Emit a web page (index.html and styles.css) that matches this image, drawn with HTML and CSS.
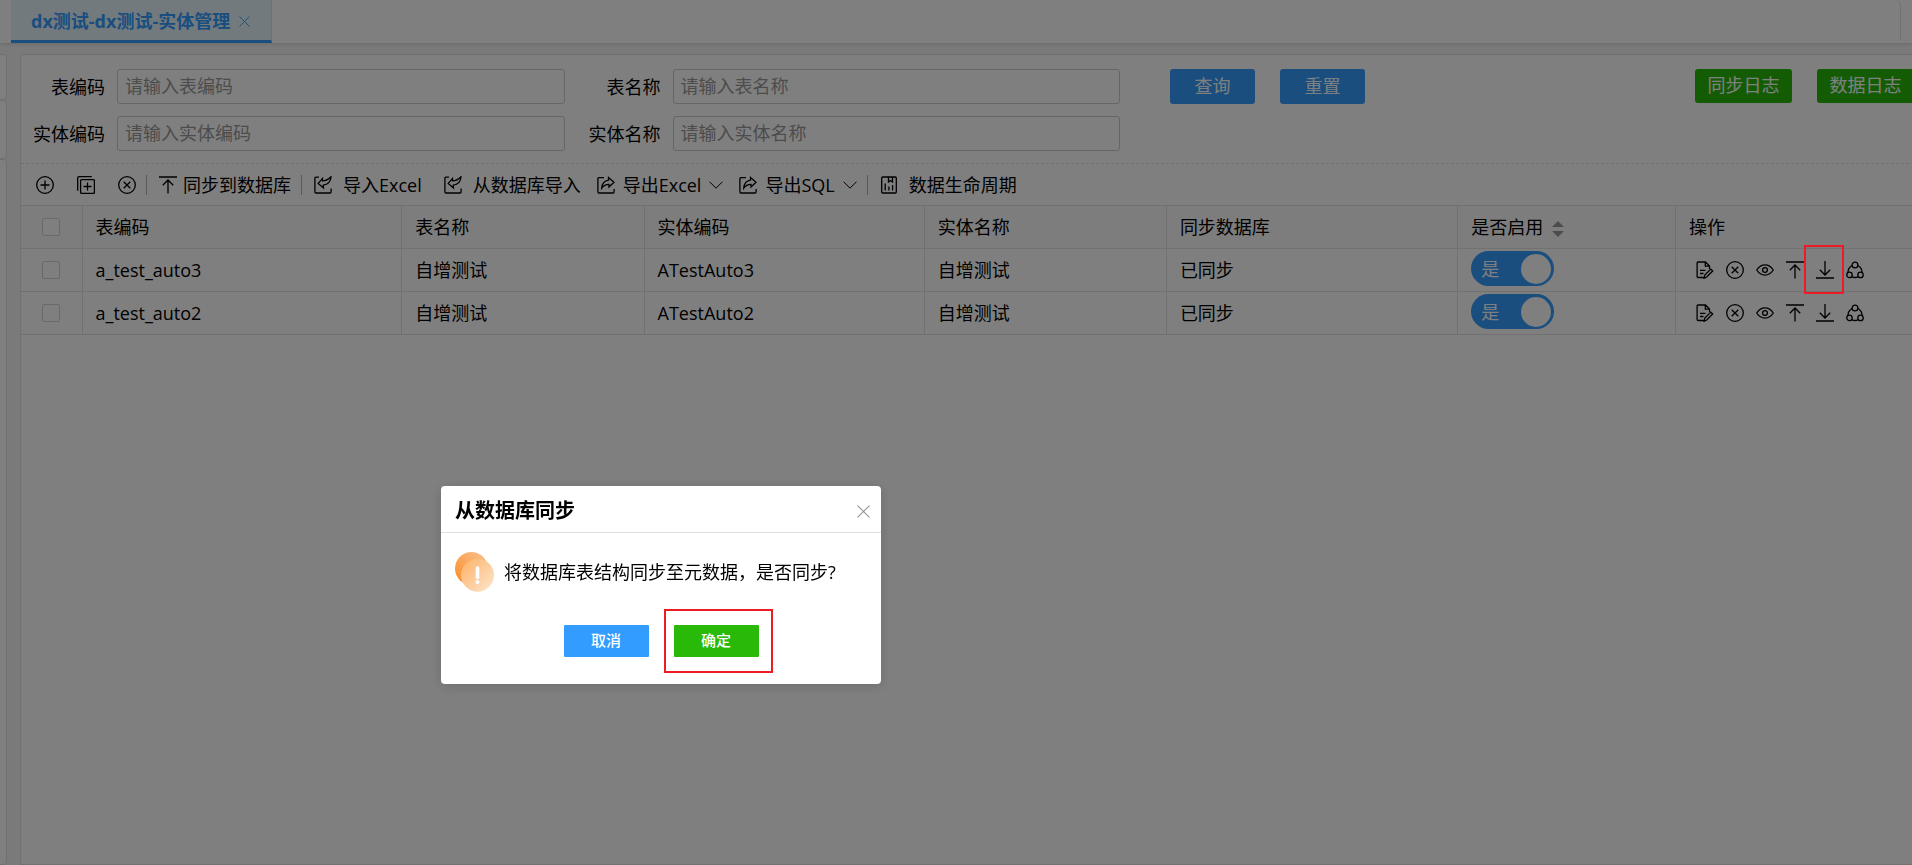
FILE: index.html
```
<!DOCTYPE html>
<html lang="zh-CN">
<head>
    <meta charset="UTF-8">
    <meta name="viewport" content="width=device-width, initial-scale=1.0">
    <title>实体管理</title>
    <link rel="stylesheet" href="styles.css">
</head>
<body>
    <svg class="sprite" aria-hidden="true">
        <symbol id="i-add" viewBox="0 0 18 18"><circle cx="9" cy="9" r="8.3"/><path d="M9 4.5v9M4.5 9h9"/></symbol>
        <symbol id="i-copy" viewBox="0 0 18 18"><rect x="3.6" y="3.6" width="13.8" height="13.8" rx="1"/><path d="M10.5 6.5v8M6.5 10.5h8M.7 14.8V2.2Q.7.7 2.2.7h12.6"/></symbol>
        <symbol id="i-del" viewBox="0 0 18 18"><circle cx="9" cy="9" r="8.3"/><path d="M5.7 5.7l6.6 6.6M12.3 5.7l-6.6 6.6"/></symbol>
        <symbol id="i-up" viewBox="0 0 18 18"><path d="M0 1h18M9 17.5V4M3.8 9.2L9 4l5.2 5.2"/></symbol>
        <symbol id="i-down" viewBox="0 0 18 18"><path d="M0 17h18M9 0v13.8M3.8 8.8L9 14l5.2-5.2"/></symbol>
        <symbol id="i-import" viewBox="0 0 18 18"><path d="M5 1.2H2Q.9 1.2.9 2.4v13.4Q.9 17 2 17h14q1.1 0 1.1-1.2v-3.3"/><path d="M4.2 7.4l4.300-5v2.500C11.500 4.700 14.500 3.300 17 .700 16.600 5.500 13.500 8.600 9.300 9.200l.2 2.800z"/></symbol>
        <symbol id="i-export" viewBox="0 0 18 18"><path d="M7 1.6H2Q.9 1.6.9 2.8v13Q.9 17 2 17h14q1.1 0 1.1-1.2v-2.8"/><path d="M11.5 1.5l5.5 4.7-5 4.700V8.400c-3.300-.1-5.500 1.300-7.300 3.800.3-4.500 2.800-7.300 6.800-8z"/></symbol>
        <symbol id="i-life" viewBox="0 0 18 18"><rect x="1.7" y="1" width="14.6" height="16" rx="1"/><path d="M8.500 1v5l2-1.500 2 1.500V1M5.200 7.500v7M8.900 10.500v4M12.600 9v5.500"/></symbol>
        <symbol id="i-edit" viewBox="0 0 18 18"><path d="M7.500 16.500H2q-.9 0-.9-1V2q0-1 .9-1h7.500l4 4v3M9.300 1v4.200h4.200M4 9.300h5.500M4 12.500h3.500M8 17.300l.8-3.200 6-6 1.900 1.900-6 6z"/></symbol>
        <symbol id="i-eye" viewBox="0 0 18 18"><path d="M.7 9C3 5.500 6 3.900 9 3.900S15 5.500 17.300 9C15 12.500 12 14.100 9 14.100S3 12.500.7 9z"/><circle cx="9" cy="9" r="2.400"/></symbol>
        <symbol id="i-share" viewBox="0 0 18 18"><circle cx="9" cy="4" r="2.900"/><circle cx="3.500" cy="13.900" r="2.700"/><circle cx="14.500" cy="13.900" r="2.700"/><path d="M6 4.500C3.500 6 2 8.500 2 11.200M12 4.500c2.500 1.500 4 4 4 6.700M6 15.800c2 .9 4 .9 6 0"/></symbol>
        <symbol id="i-close" viewBox="0 0 12 12"><path d="M.5.5l11 11M11.500.5l-11 11"/></symbol>
        <symbol id="i-caret" viewBox="0 0 14 8"><path d="M.5.7L7 7.200 13.500.7"/></symbol>
    </svg>

    <header class="tabs">
        <div class="tab">
            <a href="#">dx测试-dx测试-实体管理</a>
            <button class="tab-close" aria-label="关闭标签"><svg><use href="#i-close"/></svg></button>
        </div>
        <div class="tabs-end"></div>
    </header>

    <div class="content">
        <aside class="side">
            <div class="side-head"></div>
            <div class="side-search"></div>
            <div class="side-body"></div>
        </aside>

        <main class="panel">
            <form class="search">
                <div class="fields">
                    <label for="tableCode">表编码</label>
                    <input id="tableCode" type="text" placeholder="请输入表编码">
                    <label for="tableName">表名称</label>
                    <input id="tableName" type="text" placeholder="请输入表名称">
                    <label for="entityCode">实体编码</label>
                    <input id="entityCode" type="text" placeholder="请输入实体编码">
                    <label for="entityName">实体名称</label>
                    <input id="entityName" type="text" placeholder="请输入实体名称">
                </div>
                <div class="actions">
                    <button type="button" class="btn blue">查询</button>
                    <button type="button" class="btn blue">重置</button>
                </div>
                <div class="logs">
                    <button type="button" class="btn green">同步日志</button>
                    <button type="button" class="btn green">数据日志</button>
                </div>
            </form>

            <div class="toolbar">
                <div class="group icons">
                    <button aria-label="新增"><svg><use href="#i-add"/></svg></button>
                    <button aria-label="复制新增"><svg><use href="#i-copy"/></svg></button>
                    <button aria-label="删除"><svg><use href="#i-del"/></svg></button>
                </div>
                <div class="group">
                    <button class="tight"><svg><use href="#i-up"/></svg>同步到数据库</button>
                </div>
                <div class="group">
                    <button><svg><use href="#i-import"/></svg>导入Excel</button>
                    <button class="from-db"><svg><use href="#i-import"/></svg>从数据库导入</button>
                    <button class="drop"><svg><use href="#i-export"/></svg>导出Excel<svg class="caret"><use href="#i-caret"/></svg></button>
                    <button class="drop"><svg><use href="#i-export"/></svg>导出SQL<svg class="caret"><use href="#i-caret"/></svg></button>
                </div>
                <div class="group">
                    <button><svg><use href="#i-life"/></svg>数据生命周期</button>
                </div>
            </div>

            <table class="list">
                <colgroup>
                    <col class="c-check"><col class="c-code"><col class="c-name"><col class="c-entity">
                    <col class="c-name"><col class="c-sync"><col class="c-enable"><col>
                </colgroup>
                <thead>
                    <tr>
                        <th class="check"><input type="checkbox" aria-label="全选"></th>
                        <th>表编码</th>
                        <th>表名称</th>
                        <th>实体编码</th>
                        <th>实体名称</th>
                        <th>同步数据库</th>
                        <th>是否启用<span class="sort"></span></th>
                        <th>操作</th>
                    </tr>
                </thead>
                <tbody>
                    <tr>
                        <td class="check"><input type="checkbox" aria-label="选择 a_test_auto3"></td>
                        <td>a_test_auto3</td>
                        <td>自增测试</td>
                        <td>ATestAuto3</td>
                        <td>自增测试</td>
                        <td>已同步</td>
                        <td class="enable"><label class="switch"><input type="checkbox" checked><span>是</span></label></td>
                        <td>
                            <div class="ops">
                                <button aria-label="编辑"><svg><use href="#i-edit"/></svg></button>
                                <button aria-label="删除"><svg><use href="#i-del"/></svg></button>
                                <button aria-label="查看"><svg><use href="#i-eye"/></svg></button>
                                <button aria-label="同步到数据库"><svg><use href="#i-up"/></svg></button>
                                <button class="mark" aria-label="从数据库同步"><svg><use href="#i-down"/></svg></button>
                                <button aria-label="关联"><svg><use href="#i-share"/></svg></button>
                            </div>
                        </td>
                    </tr>
                    <tr>
                        <td class="check"><input type="checkbox" aria-label="选择 a_test_auto2"></td>
                        <td>a_test_auto2</td>
                        <td>自增测试</td>
                        <td>ATestAuto2</td>
                        <td>自增测试</td>
                        <td>已同步</td>
                        <td class="enable"><label class="switch"><input type="checkbox" checked><span>是</span></label></td>
                        <td>
                            <div class="ops">
                                <button aria-label="编辑"><svg><use href="#i-edit"/></svg></button>
                                <button aria-label="删除"><svg><use href="#i-del"/></svg></button>
                                <button aria-label="查看"><svg><use href="#i-eye"/></svg></button>
                                <button aria-label="同步到数据库"><svg><use href="#i-up"/></svg></button>
                                <button aria-label="从数据库同步"><svg><use href="#i-down"/></svg></button>
                                <button aria-label="关联"><svg><use href="#i-share"/></svg></button>
                            </div>
                        </td>
                    </tr>
                </tbody>
            </table>
        </main>
    </div>

    <div class="mask"></div>
    <section class="modal" role="dialog" aria-labelledby="modal-title">
        <header class="modal-head">
            <h2 id="modal-title">从数据库同步</h2>
            <button aria-label="关闭"><svg><use href="#i-close"/></svg></button>
        </header>
        <div class="modal-body">
            <svg class="warn" viewBox="0 0 40 40">
                <defs>
                    <linearGradient id="g-back" x1="1" y1="0" x2="0" y2="1"><stop offset="0" stop-color="#f8c496"/><stop offset="1" stop-color="#fb8a20"/></linearGradient>
                    <linearGradient id="g-front" x1="0" y1="0" x2="1" y2="1"><stop offset="0" stop-color="#fdb164"/><stop offset="1" stop-color="#fde6cf"/></linearGradient>
                </defs>
                <circle cx="16.5" cy="16.5" r="16.5" fill="url(#g-back)"/>
                <circle cx="22.5" cy="23.2" r="16.5" fill="url(#g-front)"/>
                <path d="M22.5 16v9.500" stroke="#fff" stroke-width="3.6" stroke-linecap="round"/>
                <circle cx="22.5" cy="30" r="2" fill="#fff"/>
            </svg>
            <p>将数据库表结构同步至元数据，是否同步?</p>
        </div>
        <footer class="modal-foot">
            <button class="blue">取消</button>
            <button class="green mark">确定</button>
        </footer>
    </section>
</body>
</html>
```
FILE: styles.css
```
*{padding:0; margin:0; box-sizing:border-box;}
:root{
    --blue:#339cff;
    --green:#29b908;
    --line:#e2e2e2;
    --mark:#ed1c24;
}
html,body{height:100%;}
body{
    display:flex; flex-direction:column;
    overflow:hidden;
    background:#f5f5f5; color:#000;
    font:400 18px/24px "Open Sans","Noto Sans CJK SC",sans-serif;
}
button{border:0; background:none; color:inherit; font:inherit; cursor:pointer;}
svg{display:block; width:18px; height:18px; fill:none; stroke:currentColor; stroke-width:1.3;}
.sprite{position:absolute; width:0; height:0;}

/* tabs */
.tabs{
    display:flex; justify-content:space-between;
    height:43px; padding:0 11px;
    background:#fff; box-shadow:0 1px 4px rgba(0,0,0,0.15);
}
.tab{
    display:flex; align-items:center; gap:9px;
    padding:2px 21px 0 20px;
    background:#e6f4fc; border-bottom:3px solid var(--blue);
    border-right:1px solid #d6e2ea;
    color:var(--blue);
}
.tab a{color:inherit; font-weight:bold; text-decoration:none;}
.tab-close svg{width:11px; height:11px; stroke-width:1;}
.tabs-end{width:12px; margin-bottom:3px; border-right:1px solid var(--line); border-radius:0 6px 0 0;}

/* content */
.content{flex:1; display:flex; gap:13px; padding-top:11px;}
.side{width:7px; display:flex; flex-direction:column;}
.side div{background:#fff; border:1px solid var(--line); border-left:0; border-radius:0 4px 4px 0;}
.side .side-head{height:46px;}
.side .side-search{height:59px;}
.side .side-body{flex:1;}
.panel{
    flex:1; margin-right:-2px;
    background:#fff; border:1px solid var(--line); border-right:0; border-radius:4px 0 0 0;
}

/* search */
.search{
    display:flex; align-items:flex-start;
    padding:14px 0 12px 11px;
    border-bottom:1px dashed var(--line);
}
.fields{
    flex:0 1 1088px;
    display:grid; grid-template-columns:73px 1fr 84px 1fr; gap:12px; align-items:center;
}
.fields label{text-align:right;}
.fields input{
    width:100%; min-width:0; height:35px; padding:0 7px 2px;
    border:1px solid #ccc; border-radius:3px;
    font:inherit;
}
.fields input::placeholder{color:#999;}
.actions,.logs{display:flex; gap:25px;}
.actions{margin-left:50px;}
.logs{margin-left:auto;}
.btn{height:35px; padding-bottom:2px; border-radius:3px; color:#fff;}
.actions .btn{width:85px;}
.logs .btn{width:97px; height:34px;}
.blue{background:var(--blue);}
.green{background:var(--green);}

/* toolbar */
.toolbar{display:flex; align-items:center; height:41px; padding-left:15px;}
.group{display:flex; align-items:center; gap:16px;}
.group+.group{margin-left:10px; padding-left:13px; position:relative;}
.group+.group:before{content:''; position:absolute; left:0; top:2px; height:20px; border-left:1px solid #b5b5b5;}
.group.icons{gap:23px;}
.toolbar button{display:flex; align-items:center; gap:11px;}
.toolbar .tight{gap:6px;}
.toolbar .from-db{margin-left:6px;}
.toolbar .drop{gap:8px;}
.toolbar .caret{width:14px; height:8px; stroke-width:1;}

/* table */
.list{width:100%; table-layout:fixed; border-collapse:collapse;}
.list th,.list td{
    height:43px; padding:0 13px;
    border:1px solid var(--line); border-left:0;
    font-weight:400; text-align:left;
}
.list thead{background:#fafafa;}
.list .check{padding:0;}
.c-check{width:61px;}
.c-code{width:16.9%;}
.c-name{width:12.8%;}
.c-entity{width:14.8%;}
.c-sync{width:15.4%;}
.c-enable{width:11.5%;}
.check input{
    appearance:none; display:block; width:18px; height:18px; margin:0 auto;
    border:1px solid #d2d2d2; border-radius:2px; background:#fff;
}
.sort{display:inline-grid; gap:4px; margin-left:9px; vertical-align:middle;}
.sort:before,.sort:after{content:''; border:6px solid transparent;}
.sort:before{border-top:0; border-bottom-color:#999;}
.sort:after{border-bottom:0; border-top-color:#999;}

.list .enable{padding-bottom:3px;}
.switch{
    display:flex; align-items:center; justify-content:space-between;
    width:83px; height:35px; padding:0 3px 0 10px;
    background:var(--blue); border-radius:18px; color:#fff;
}
.switch input{
    appearance:none; order:1;
    width:30px; height:30px; border-radius:50%; background:#fff;
}
.ops{display:flex; gap:12px; padding-left:7px;}
.ops button{position:relative;}

/* modal */
.mask{position:fixed; inset:0; z-index:10; background:rgba(0,0,0,0.5);}
.modal{
    position:fixed; left:441px; top:486px; z-index:20;
    width:440px;
    background:#fff; border-radius:4px; box-shadow:0 2px 12px rgba(0,0,0,0.15);
}
.modal-head{
    display:flex; align-items:center; justify-content:space-between;
    height:47px; padding:4px 11px 0 14px;
    border-bottom:1px solid #dfdfe2;
}
.modal-head h2{font-size:20px; font-weight:bold;}
.modal-head svg{width:13px; height:13px; color:#909399; stroke-width:1;}
.modal-body{display:flex; align-items:center; gap:9px; padding:19px 14px 0;}
.modal-body .warn{width:40px; height:40px; stroke:none;}
.modal-foot{display:flex; justify-content:center; gap:25px; padding:33px 0 27px;}
.modal-foot button{
    position:relative; width:85px; height:32px; padding-bottom:2px; border-radius:1px;
    color:#fff; font-size:15px; font-weight:500;
}

.mark:after{content:''; position:absolute; border:2px solid var(--mark);}
.ops .mark:after{z-index:30; inset:-16px -10px -15px -12px;}
.modal-foot .mark:after{inset:-16px -14px -16px -10px;}
```
